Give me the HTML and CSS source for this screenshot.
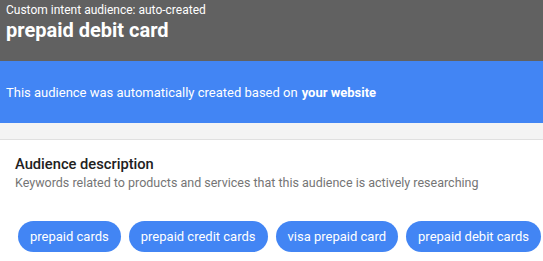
FILE: index.html
```html
<!DOCTYPE html>
<html>
<head>
<meta charset="utf-8">
<link rel="stylesheet" href="styles.css">
</head>
<body>
<header class="header">
  <div class="subtitle">Custom intent audience: auto-created</div>
  <div class="title">prepaid debit card</div>
</header>
<div class="banner">This audience was automatically created based on <b>your website</b></div>
<div class="strip"></div>
<section class="content">
  <h2 class="heading">Audience description</h2>
  <p class="desc">Keywords related to products and services that this audience is actively researching</p>
  <div class="chips">
    <span class="chip">prepaid cards</span>
    <span class="chip">prepaid credit cards</span>
    <span class="chip">visa prepaid card</span>
    <span class="chip">prepaid debit cards</span>
  </div>
</section>
</body>
</html>
```

FILE: styles.css
```css
* { box-sizing: border-box; }
html, body { margin: 0; padding: 0; background: #fff; }
body { font-family: Roboto, "Liberation Sans", sans-serif; width: 543px; height: 261px; overflow: hidden; }
.header { background: #616161; color: #fff; height: 61px; padding: 3px 6px 0; }
.subtitle { font-size: 12px; line-height: 15px; }
.title { font-size: 20px; font-weight: 700; line-height: 24px; }
.banner { background: #4285f4; color: #fff; height: 62px; display: flex; align-items: center; padding: 0 6px; font-size: 13px; }
.banner b { font-weight: 700; margin-left: 4px; }
.strip { background: #f4f4f4; height: 17px; border-bottom: 1px solid #e0e0e0; }
.content { padding: 15px 14px 0 15px; }
.heading { margin: 0; font-size: 14.7px; font-weight: 500; color: #212121; line-height: 19px; }
.desc { margin: 1px 0 0; font-size: 12.5px; color: #757575; line-height: 16px; }
.chips { display: flex; gap: 8px; margin-top: 30px; margin-left: 3px; }
.chip { background: #4285f4; color: #fff; font-size: 13px; height: 31px; line-height: 31px; padding: 0 12px; border-radius: 16px; white-space: nowrap; }
```
